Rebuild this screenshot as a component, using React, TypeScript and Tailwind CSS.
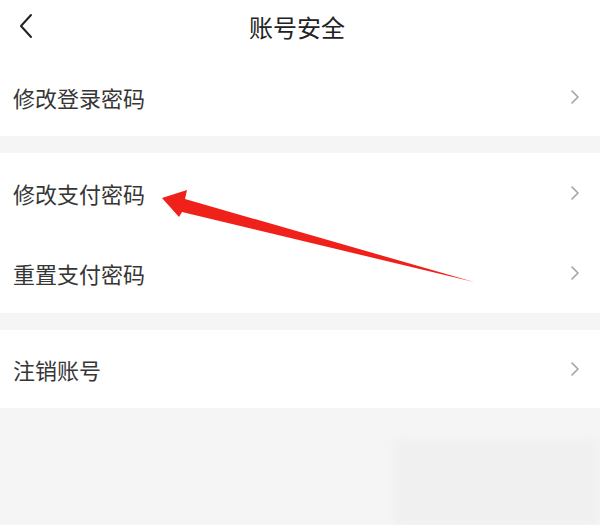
import React from "react";

const font = { fontFamily: '"Noto Sans CJK SC", "Noto Sans", sans-serif' };

function Chevron() {
  return (
    <svg width="10" height="14" viewBox="0 0 10 14" fill="none">
      <polyline points="2,1 8,7 2,13" stroke="#a3a3a3" strokeWidth="1.6" strokeLinecap="round" strokeLinejoin="round" />
    </svg>
  );
}

function Row({ label, h }: { label: string; h: string }) {
  return (
    <div className={`flex items-center justify-between pl-[13px] pr-[20px] ${h}`}>
      <span className="text-[22px] leading-none text-[#363636]">{label}</span>
      <Chevron />
    </div>
  );
}

export default function App() {
  return (
    <div className="relative w-[600px] h-[525px] bg-[#f5f5f5] overflow-hidden" style={font}>
      <div className="bg-white">
        <div className="relative flex items-center justify-center h-[58px]">
          <svg className="absolute left-[18px] top-[13px]" width="16" height="26" viewBox="0 0 16 26" fill="none">
            <polyline points="13,2 3,13 13,24" stroke="#222222" strokeWidth="2" strokeLinecap="round" strokeLinejoin="round" />
          </svg>
          <span className="text-[24px] leading-none text-[#222222] -translate-x-[3px] -translate-y-[2px]">账号安全</span>
        </div>
        <Row label="修改登录密码" h="h-[78px]" />
      </div>
      <div className="h-[17px]" />
      <div className="bg-white">
        <Row label="修改支付密码" h="h-[80px]" />
        <Row label="重置支付密码" h="h-[80px]" />
      </div>
      <div className="h-[17px]" />
      <div className="bg-white">
        <Row label="注销账号" h="h-[78px]" />
      </div>
      <div className="absolute left-[395px] top-[440px] w-[202px] h-[85px] bg-[#f0f0f0] blur-[3px]" />
      <svg className="absolute left-0 top-0" width="600" height="525" viewBox="0 0 600 525">
        <polygon
          points="162,198 187,190 185,199 474,282 182,212 179,217"
          fill="#f0201a"
        />
      </svg>
    </div>
  );
}
